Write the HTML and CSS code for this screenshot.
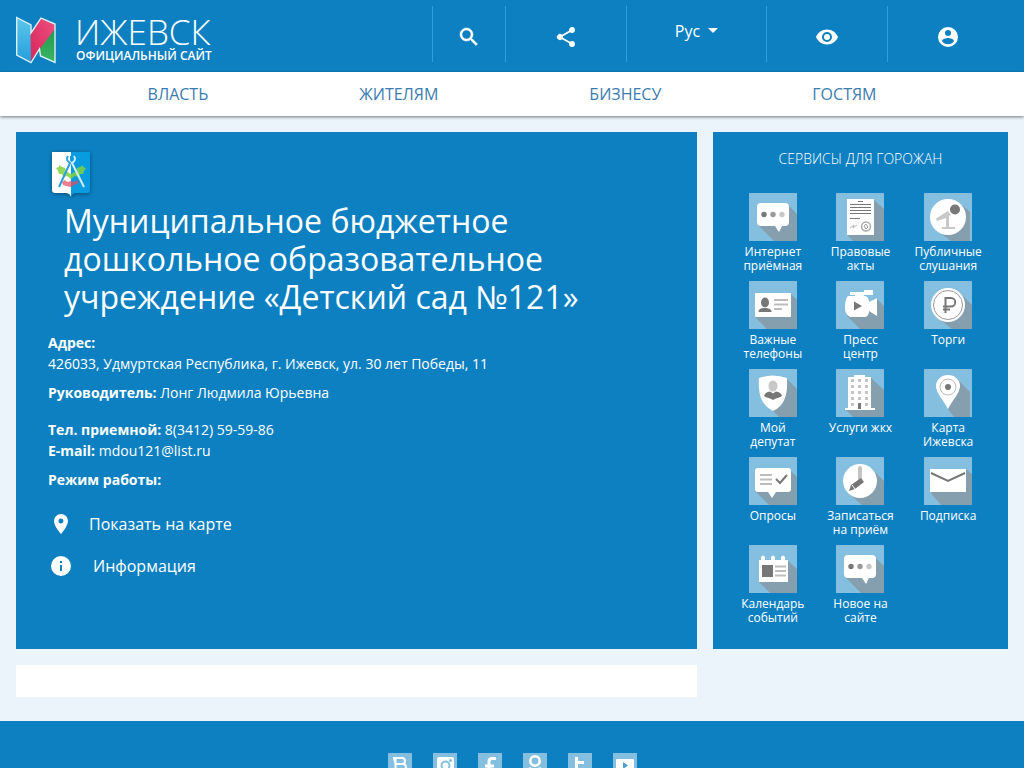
FILE: index.html
```html
<!DOCTYPE html>
<html lang="ru">
<head>
<meta charset="utf-8">
<meta name="viewport" content="width=device-width, initial-scale=1">
<title>Ижевск — официальный сайт</title>
<link rel="stylesheet" href="styles.css">
</head>
<body>
<header class="header">
  <a class="logo" href="#">
    <svg class="logo-mark" viewBox="0 0 40 48" aria-hidden="true">
      <defs>
        <linearGradient id="lb" x1="0" y1="0" x2="0" y2="1"><stop offset="0" stop-color="#5cc6ec"/><stop offset="1" stop-color="#249fdc"/></linearGradient>
        <linearGradient id="lp" x1="0" y1="1" x2="1" y2="0"><stop offset="0" stop-color="#d5265c"/><stop offset="1" stop-color="#f0507f"/></linearGradient>
        <linearGradient id="lg" x1="0" y1="0" x2="0" y2="1"><stop offset="0" stop-color="#1f9a50"/><stop offset="1" stop-color="#3db460"/></linearGradient>
      </defs>
      <path d="M.7 1.5 15 9v37L.7 39z" fill="url(#lb)"/>
      <path d="M39 13v33.5L24.500 39l-2-6z" fill="url(#lg)"/>
      <path d="M14.500 17 25 2l14 6v5L23 34l-8 12z" fill="url(#lp)"/>
      <path d="M.7 1.500 15 9v8L25 2l14 6v38.500L24.500 40l-1-7L15 46.500.7 39z" fill="none" stroke="#d9f1f8" stroke-width="1.400"/>
    </svg>
    <span class="logo-text"><span class="logo-name">ИЖЕВСК</span><span class="logo-sub">ОФИЦИАЛЬНЫЙ САЙТ</span></span>
  </a>
  <div class="tools">
    <button class="tool tool-search" aria-label="Поиск"><svg class="icon" viewBox="0 0 24 24"><path stroke="#fff" stroke-width=".5" d="M15.500 14h-.79l-.28-.27A6.500 6.500 0 1 0 13.730 14.430l.27.280v.79l5 4.990L20.490 19zm-6 0a4.500 4.500 0 1 1 0-9 4.500 4.500 0 0 1 0 9z"/></svg></button>
    <button class="tool" aria-label="Поделиться"><svg class="icon" viewBox="0 0 24 24"><path d="M18 16.080c-.76 0-1.440.3-1.960.77L8.910 12.700a3.300 3.300 0 0 0 0-1.400l7.050-4.110A3 3 0 1 0 15 5c0 .24.040.47.090.7L8.040 9.810a3 3 0 1 0 0 4.380l7.120 4.160c-.05.21-.08.43-.08.650A2.920 2.920 0 1 0 18 16.080z"/></svg></button>
    <button class="tool tool-lang">Рус <span class="caret"></span></button>
    <button class="tool" aria-label="Версия для слабовидящих"><svg class="icon" viewBox="0 0 24 24"><path d="M12 4.500C7 4.500 2.730 7.610 1 12c1.730 4.390 6 7.500 11 7.500s9.270-3.110 11-7.500c-1.730-4.390-6-7.500-11-7.500zM12 17a5 5 0 1 1 0-10 5 5 0 0 1 0 10zm0-8a3 3 0 1 0 0 6 3 3 0 0 0 0-6z"/></svg></button>
    <button class="tool" aria-label="Личный кабинет"><svg class="icon" viewBox="0 0 24 24"><path d="M12 2a10 10 0 1 0 0 20 10 10 0 0 0 0-20zm0 3a3 3 0 1 1 0 6 3 3 0 0 1 0-6zm0 14.200A7.200 7.200 0 0 1 6 15.980c.03-1.990 4-3.080 6-3.080s5.970 1.090 6 3.080a7.200 7.200 0 0 1-6 3.220z"/></svg></button>
  </div>
</header>
<nav class="nav">
  <a href="#">ВЛАСТЬ</a><a href="#">ЖИТЕЛЯМ</a><a href="#">БИЗНЕСУ</a><a href="#">ГОСТЯМ</a>
</nav>
<main class="layout">
  <section class="card">
    <svg class="emblem" viewBox="0 0 46 54" aria-hidden="true">
      <path d="M4 4h19v45c-1-3-3-4-5-4H7c-2 0-3-1-3-3z" fill="#fff"/>
      <path d="M23 4h19v38c0 2-1 3-3 3H28c-3 0-4 1-5 4z" fill="#079be0"/>
      <path d="M8 20l3-1 0-2 3 2 3 1 1 3 5 3 5-3 1-3 3-1 3-2 0 2 3 1-2 3-1 3-3 0-1 3-4-1-4 3-4-3-4 1-1-3-3 0-1-3z" fill="#7fd140" opacity=".85"/>
      <path d="M14 34l3-2 2 2 4-1 3 1 3-2 2 2-2 2-3 1-3 2-5-1-3-1z" fill="#e8495a" opacity=".7"/>
      <path d="M22 15 11 39M20 8c-2 3-1 6 3 7" fill="none" stroke="#2f9fdc" stroke-width="2"/>
      <path d="M24 15l12 24M26 8c2 3 1 6-3 7" fill="none" stroke="#d3ecfa" stroke-width="2"/>
      <path d="M23 8v5" stroke="#1598db" stroke-width="2"/>
    </svg>
    <h1>Муниципальное бюджетное дошкольное образовательное учреждение «Детский сад №121»</h1>
    <div class="details">
      <p><b>Адрес:</b><br>426033, Удмуртская Республика, г. Ижевск, ул. 30 лет Победы, 11</p>
      <p class="lead"><b>Руководитель:</b> Лонг Людмила Юрьевна</p>
      <p><b>Тел. приемной:</b> 8(3412) 59-59-86<br><b>E-mail:</b> mdou121@list.ru</p>
      <p><b>Режим работы:</b></p>
    </div>
    <div class="links">
      <a href="#"><svg class="icon" viewBox="0 0 24 24"><path d="M12 2a7 7 0 0 0-7 7c0 5.250 7 13 7 13s7-7.750 7-13a7 7 0 0 0-7-7zm0 9.500a2.500 2.500 0 1 1 0-5 2.500 2.500 0 0 1 0 5z"/></svg><span>Показать на карте</span></a>
      <a class="info" href="#"><svg class="icon" viewBox="0 0 24 24"><path d="M12 2a10 10 0 1 0 0 20 10 10 0 0 0 0-20zm1 15h-2v-6h2zm0-8h-2V7h2z"/></svg><span>Информация</span></a>
    </div>
  </section>
  <aside class="services">
    <h2>СЕРВИСЫ ДЛЯ ГОРОЖАН</h2>
    <div class="grid">
      <a href="#"><svg class="tile" viewBox="0 0 48 48"><path class="sh" d="M39 12l9 9v27H25L9 32z"/><path class="w" d="M12 10h24a4 4 0 0 1 4 4v15a4 4 0 0 1-4 4h-3l-3 6-4-6H12a4 4 0 0 1-4-4V14a4 4 0 0 1 4-4z"/><circle class="d" cx="15" cy="21.500" r="2.700"/><circle cx="24" cy="21.500" r="2.700" fill="#999"/><circle class="l" cx="33" cy="21.500" r="2.700"/></svg><span>Интернет приёмная</span></a>
      <a href="#"><svg class="tile" viewBox="0 0 48 48"><path class="sh" d="M38 7l10 9v32H17l-6-6z"/><path class="w" d="M11 6h27v36H11z"/><path d="M22 8.500h5M14 11.500h21M14 14.500h21M14 17.500h21M14 20.500h21M14 25.500h10" stroke="#777" stroke-width="1.200"/><path d="M14 35l4-3-1 3 4-3" fill="none" stroke="#bbb"/><circle cx="30" cy="33.500" r="4.500" fill="none" stroke="#aaa" stroke-width="1.500"/><path d="M28 33l2-2 2 3-2 2z" fill="none" stroke="#999"/></svg><span>Правовые акты</span></a>
      <a href="#"><svg class="tile" viewBox="0 0 48 48"><path class="sh" d="M38 12l8 7v29H27L12 37z"/><circle class="w" cx="24" cy="24" r="18"/><path class="l" d="M12 25.500 24 18l3 4-2 1v11h6v2H18v-2h4V25l-9 3z"/><circle class="d" cx="31" cy="16.500" r="5"/></svg><span>Публичные слушания</span></a>
      <a href="#"><svg class="tile" viewBox="0 0 48 48"><path class="sh" d="M41 12l7 7v29H18L6 36z"/><rect class="w" x="6" y="12" width="36" height="24" rx="1"/><ellipse class="d" cx="16" cy="21.500" rx="4" ry="5"/><path class="d" d="M9.500 31c0-3 3-4 6.500-4s6.500 1 6.500 4z"/><path class="ln" d="M25 19h14M25 23.500h14M25 28h8"/></svg><span>Важные телефоны</span></a>
      <a href="#"><svg class="tile" viewBox="0 0 48 48"><path class="sh" d="M40 17l8 8v23H24L11 35z"/><path class="w" d="M12 15h7v-1h-5v-3h14V9h9v5h-9v1c3 0 5 2 5 6l8-4v18l-8-5c0 4-2 6-5 6H14c-4-3-5-5-5-10s1-9 3-11z"/><path class="d" d="M18 20.500 26 25l-8 4.500z"/></svg><span>Пресс центр</span></a>
      <a href="#"><svg class="tile" viewBox="0 0 48 48"><path class="sh" d="M36 12l12 12v24H28L12 36z"/><circle class="w" cx="24" cy="24" r="17"/><circle cx="24" cy="24" r="14.500" fill="none" stroke="#999"/><path d="M21.500 32V17H27a4 4 0 0 1 0 8.500h-8M19 28.500h7" fill="none" stroke="#777" stroke-width="2"/></svg><span>Торги</span></a>
      <a href="#"><svg class="tile" viewBox="0 0 48 48"><path class="sh" d="M38 10l10 10v28H30l-6-6z"/><path class="w" d="M10 9q14-5 28 0c1 16-2 27-14 33C12 36 9 25 10 9z"/><ellipse class="l" cx="24" cy="17" rx="4.500" ry="5.500"/><path class="d" d="M15 27c1-3 3-4 6-4.500l3 2 3-2c3 .5 5 1.500 6 4.500-3 2-6 2-9 4-3-2-6-2-9-4z"/></svg><span>Мой депутат</span></a>
      <a href="#"><svg class="tile" viewBox="0 0 48 48"><path class="sh" d="M34 8l14 13v27H17l-7-7z"/><path class="w" d="M12 8h6V6h11v2h6v31h4v2H9v-2h3z"/><path d="M16.500 10v28M23.500 10v22M30.500 10v28" stroke="#c4c4c4" stroke-width="3" stroke-dasharray="3 3"/><path class="d" d="M22 34h3v6h-3z"/></svg><span>Услуги жкх</span></a>
      <a href="#"><svg class="tile" viewBox="0 0 48 48"><path class="sh" d="M33 10l13 13v25H30l-6-8z"/><path class="w" d="M24 40C19 30 12 24 12 17a12 11 0 0 1 24 0c0 7-7 13-12 23z"/><circle cx="24" cy="18" r="8" fill="none" stroke="#bbb"/><circle class="d" cx="24" cy="18" r="3"/></svg><span>Карта Ижевска</span></a>
      <a href="#"><svg class="tile" viewBox="0 0 48 48"><path class="sh" d="M40 12l8 8v28H20L6 34z"/><path class="w" d="M9 11h30a3 3 0 0 1 3 3v18a3 3 0 0 1-3 3H27l-4 6-4-6H9a3 3 0 0 1-3-3V14a3 3 0 0 1 3-3z"/><path class="ln" d="M11 18h12M11 22.500h12M11 27h12"/><path d="M27 22l4 4 7-8" fill="none" stroke="#777" stroke-width="2"/></svg><span>Опросы</span></a>
      <a href="#"><svg class="tile" viewBox="0 0 48 48"><path class="sh" d="M36 12l12 12v24H26L12 36z"/><circle class="w" cx="24" cy="24" r="17"/><path d="M24 11v12" stroke="#c4c4c4" stroke-width="4" stroke-linecap="round"/><path class="d" d="M25 21l3 4-9 7-6 2 2-6z"/><path d="M16 28l3 4" stroke="#fff"/></svg><span>Записаться на приём</span></a>
      <a href="#"><svg class="tile" viewBox="0 0 48 48"><path class="sh" d="M42 12l6 5v31H17L6 35z"/><path class="w" d="M6 12h36v23H6z"/><path d="M7 16l17 8 17-8" fill="none" stroke="#777" stroke-width="2"/></svg><span>Подписка</span></a>
      <a href="#"><svg class="tile" viewBox="0 0 48 48"><path class="sh" d="M38 15l10 9v24H21L10 37z"/><path class="w" d="M10 15h2v-3q2-3 4 0v3h6v-3q2-3 4 0v3h6v-3q2-3 4 0v3h3v22H10z"/><path class="d" d="M13 20h11v12H13z"/><path class="ln" d="M26 21.500h11M26 26h11M26 30.500h11"/></svg><span>Календарь событий</span></a>
      <a href="#"><svg class="tile" viewBox="0 0 48 48"><path class="sh" d="M39 12l9 9v27H25L9 32z"/><path class="w" d="M12 10h24a4 4 0 0 1 4 4v15a4 4 0 0 1-4 4h-3l-3 6-4-6H12a4 4 0 0 1-4-4V14a4 4 0 0 1 4-4z"/><circle class="d" cx="15" cy="21.500" r="2.700"/><circle cx="24" cy="21.500" r="2.700" fill="#999"/><circle class="l" cx="33" cy="21.500" r="2.700"/></svg><span>Новое на сайте</span></a>
    </div>
  </aside>
  <div class="panel"></div>
</main>
<footer class="footer">
  <a href="#" aria-label="ВКонтакте"><svg class="social" viewBox="0 0 24 24"><path d="M6 5h8q3 0 3 3t-3 3H7.500zm1.500 0v14H15q3 0 3-4t-3-4" fill="none" stroke="#fff" stroke-width="2"/></svg></a>
  <a href="#" aria-label="Instagram"><svg class="social" viewBox="0 0 24 24"><rect class="w" x="4" y="4" width="17" height="17" rx="2"/><circle cx="12.500" cy="12.500" r="4" fill="none" stroke="#85bfe0" stroke-width="2"/><circle cx="17.500" cy="7.500" r="1.500" fill="#85bfe0"/></svg></a>
  <a href="#" aria-label="Facebook"><svg class="social" viewBox="0 0 24 24"><path d="M18 5.500h-4q-3 0-3 3V22M7 13h9" fill="none" stroke="#fff" stroke-width="3"/></svg></a>
  <a href="#" aria-label="Одноклассники"><svg class="social" viewBox="0 0 24 24"><circle cx="12" cy="8" r="4.700" fill="none" stroke="#fff" stroke-width="2.500"/><path d="M6 15q6 4 12 0M12 17l-5 5M12 17l5 5" fill="none" stroke="#fff" stroke-width="2.500"/></svg></a>
  <a href="#" aria-label="Twitter"><svg class="social" viewBox="0 0 24 24"><path d="M8.500 4v12q0 4 4 4h4M8.500 9.500H16" fill="none" stroke="#fff" stroke-width="3"/></svg></a>
  <a href="#" aria-label="YouTube"><svg class="social" viewBox="0 0 24 24"><rect class="w" x="3" y="6" width="18" height="14" rx="1"/><path d="M10 9l5 3.500-5 3.500z" fill="#4a9fd0"/></svg></a>
</footer>
</body>
</html>
```
FILE: styles.css
```css
* { box-sizing: border-box; }
body {
  margin: 0;
  background: #ebf3fb;
  color: #fff;
  font-family: "Open Sans", "Noto Sans", sans-serif;
  font-size: 14px;
  line-height: 21px;
}
a { color: inherit; text-decoration: none; }
h1, h2, p { margin: 0; font-weight: 400; }
.icon { width: 24px; height: 24px; fill: #fff; display: block; }

.header {
  display: flex;
  justify-content: space-between;
  height: 72px;
  padding-left: 16px;
  background: #0d80c1;
}
.logo { display: flex; align-items: center; gap: 19px; padding-top: 8px; }
.logo-mark { width: 40px; height: 48px; }
.logo-text { display: flex; flex-direction: column; }
.logo-name { font-size: 35px; line-height: 32px; font-weight: 300; }
.logo-sub { padding-left: 1px; font-size: 12px; line-height: 16px; font-weight: 600; }
.tools { display: flex; padding: 6px 0 10px; }
.tool {
  display: flex;
  justify-content: center;
  align-items: center;
  width: 121px;
  padding: 6px 0 0;
  border: 0;
  border-left: 1px solid #2aa2e0;
  background: none;
  color: #fff;
  font: inherit;
}
.tool:last-child { width: 137px; padding-right: 16px; }
.tool-search { width: 73px; }
.tool-lang { width: 140px; gap: 8px; align-items: flex-start; padding-top: 15px; font-size: 16px; }
.caret { margin-top: 7px; border: 5px solid transparent; border-top-color: #fff; border-bottom: 0; }

.nav {
  display: flex;
  justify-content: center;
  gap: 151px;
  background: #fff;
  box-shadow: 0 1px 3px rgba(0, 0, 0, .5);
  color: #3b7cb0;
  font-size: 16px;
  line-height: 44px;
}

.layout {
  display: grid;
  grid-template-columns: minmax(0, 1fr) 295px;
  gap: 16px;
  padding: 16px 16px 24px;
}
.card { padding: 16px 32px; background: #0d80c1; }
.emblem { display: block; width: 46px; height: 54px; filter: drop-shadow(0 1px 2px rgba(0, 0, 0, .4)); }
.card h1 { max-width: 600px; padding-left: 16px; font-size: 32px; line-height: 38px; }
.details { display: grid; gap: 8px; margin-top: 16px; }
.lead { margin-bottom: 8px; }
.links { display: grid; gap: 18px; margin-top: 22px; padding-left: 1px; font-size: 16px; line-height: 24px; }
.links a { display: flex; gap: 16px; }
.links .info { gap: 20px; }

.services { padding: 16px 16px 24px; background: #0d80c1; text-align: center; }
.services h2 { font-size: 14px; line-height: 21px; font-weight: 300; }
.grid {
  display: grid;
  grid-template-columns: repeat(3, minmax(0, 1fr));
  grid-auto-rows: 80px;
  gap: 8px 0;
  margin-top: 24px;
  font-size: 12px;
  line-height: 14px;
}
.grid a { display: flex; flex-direction: column; align-items: center; gap: 4px; padding: 0 8px; }
.tile { width: 48px; height: 48px; flex: none; background: #85bfe0; }
.w { fill: #fff; }
.sh { fill: #869fae; }
.d { fill: #777; }
.l { fill: #c8c8c8; }
.ln { stroke: #bdbdbd; stroke-width: 2; }

.panel { min-height: 32px; background: #fff; }

.footer {
  display: flex;
  justify-content: center;
  gap: 21px;
  padding: 32px;
  background: #0d80c1;
}
.social { display: block; width: 24px; height: 24px; background: #85bfe0; }
```
